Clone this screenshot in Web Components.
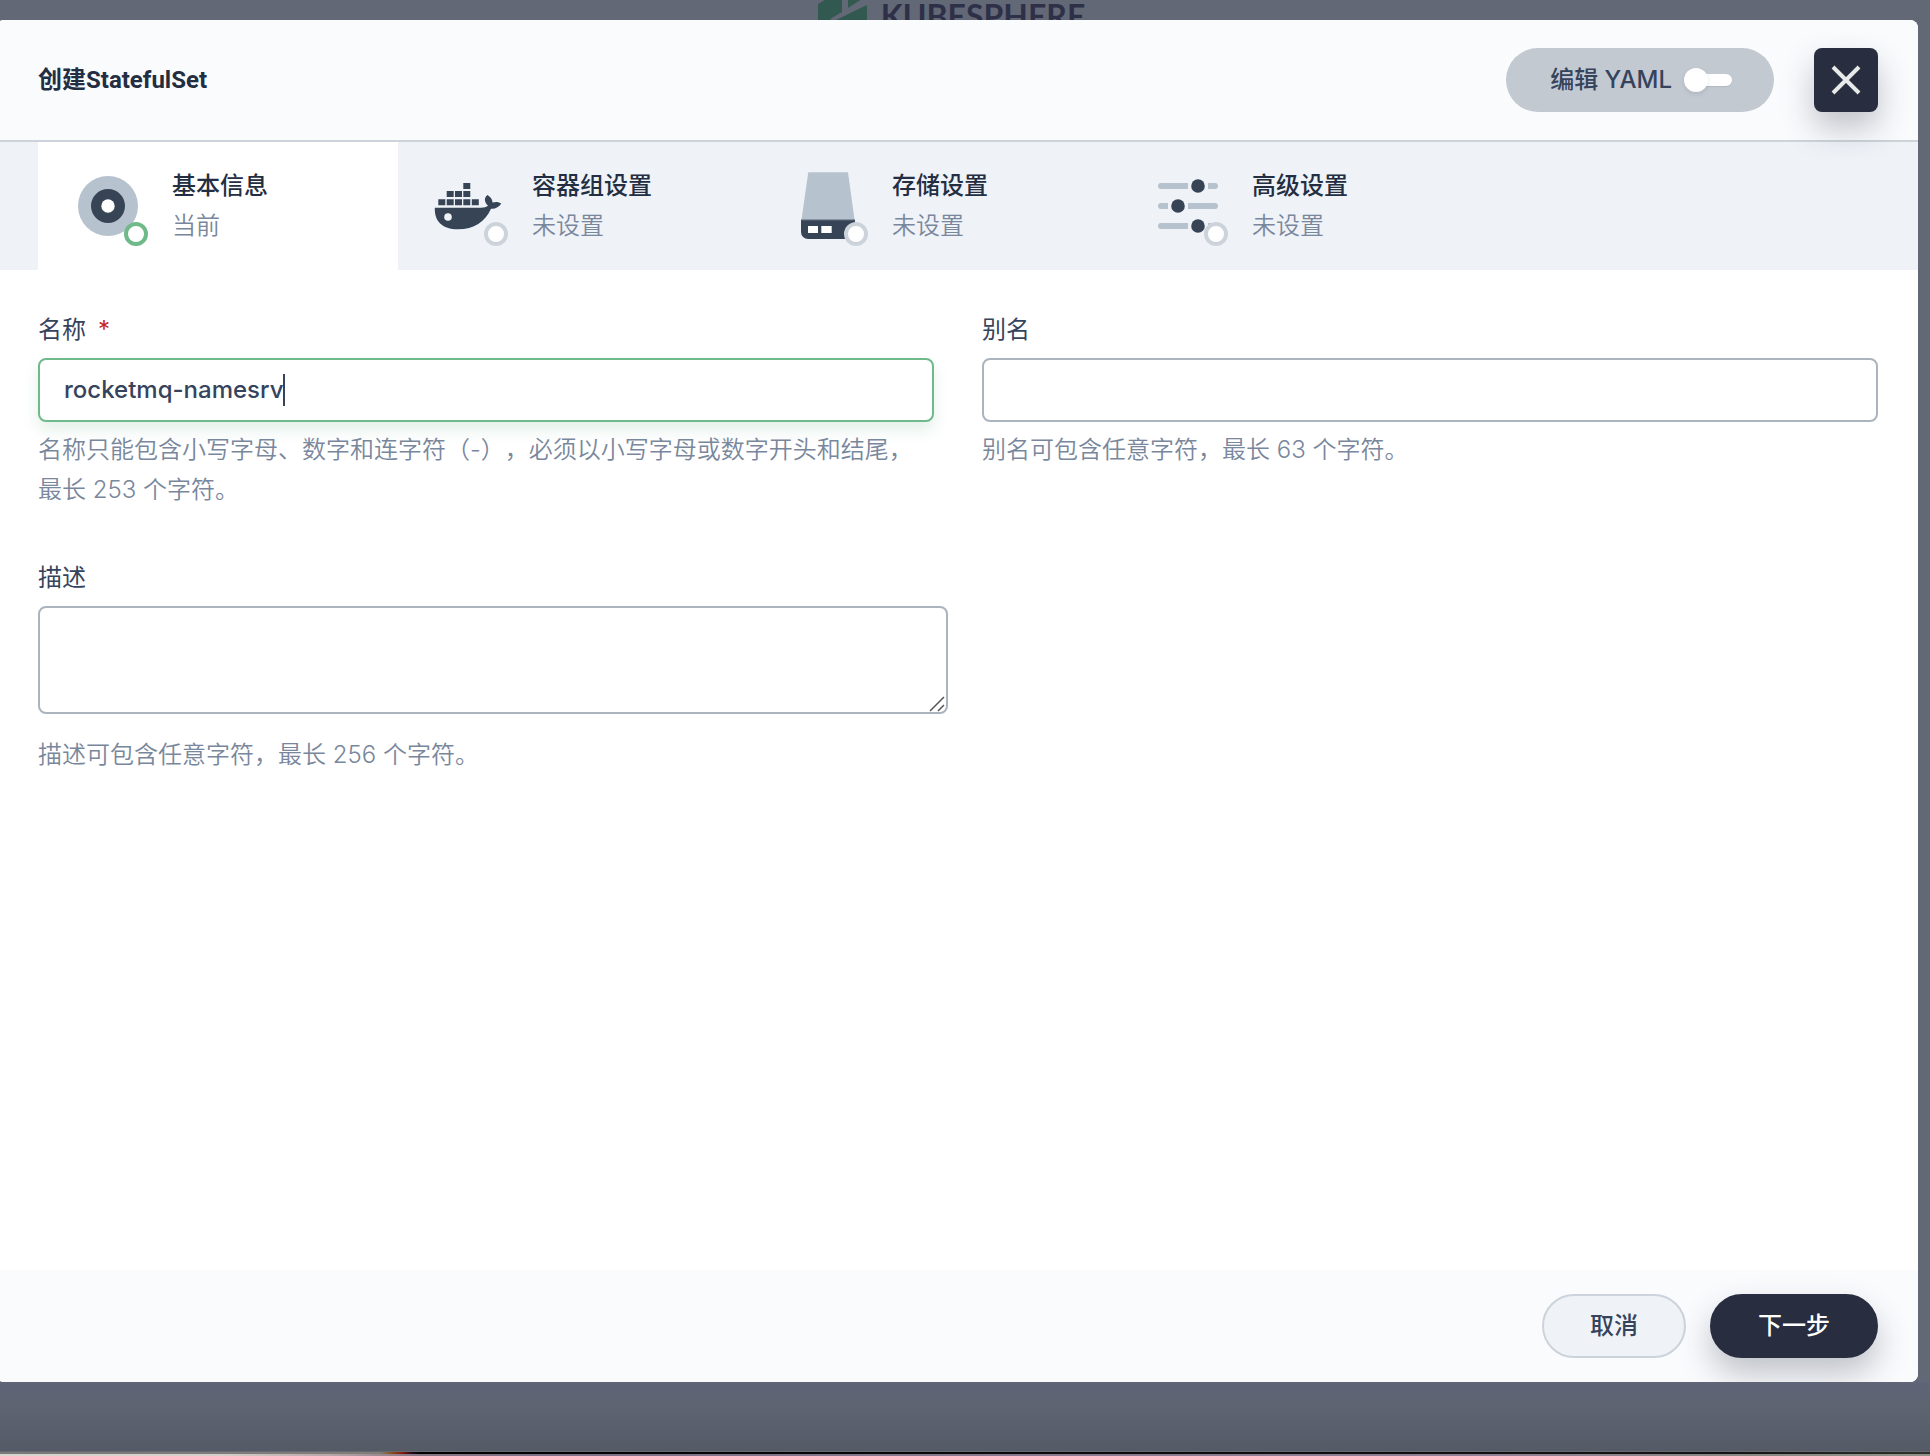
<!DOCTYPE html>
<html lang="zh-CN">
<head>
<meta charset="utf-8">
<title>创建StatefulSet</title>
<style>
  html, body { margin: 0; }
  body {
    font-family: Inter, "Noto Sans CJK SC", sans-serif;
    font-size: 24px;
    line-height: 40px;
    color: #36435c;
    overflow: hidden;
    text-spacing-trim: space-all;
  }
</style>
</head>
<body>
<ks-stage>
  <ks-modal heading="创建StatefulSet">
    <ks-yaml-switch slot="actions"></ks-yaml-switch>
    <ks-close slot="actions"></ks-close>
    <ks-steps slot="steps">
      <ks-step icon="base" active><span>基本信息</span><span slot="state">当前</span></ks-step>
      <ks-step icon="docker"><span>容器组设置</span><span slot="state">未设置</span></ks-step>
      <ks-step icon="storage"><span>存储设置</span><span slot="state">未设置</span></ks-step>
      <ks-step icon="sliders"><span>高级设置</span><span slot="state">未设置</span></ks-step>
    </ks-steps>
    <ks-form>
      <ks-field label="名称" value="rocketmq-namesrv" required focused>名称只能包含小写字母、数字和连字符（-），必须以小写字母或数字开头和结尾，最长 253 个字符。</ks-field>
      <ks-field label="别名">别名可包含任意字符，最长 63 个字符。</ks-field>
      <ks-textarea label="描述">描述可包含任意字符，最长 256 个字符。</ks-textarea>
    </ks-form>
    <ks-button slot="footer">取消</ks-button>
    <ks-button slot="footer" primary>下一步</ks-button>
  </ks-modal>
</ks-stage>

<script>
const define = (name, render) => customElements.define(name, class extends HTMLElement {
  constructor() {
    super();
    this.attachShadow({ mode: "open" });
  }
  connectedCallback() {
    if (this.shadowRoot.childNodes.length) return;
    const t = document.createElement("template");
    t.innerHTML = "<style>*{box-sizing:border-box}</style>" + render(this);
    this.shadowRoot.append(t.content.cloneNode(true));
  }
});

const ICONS = {
  base: `<circle cx="40" cy="40" r="30" fill="#b6c2cd"/><circle cx="40" cy="40" r="17" fill="#364456"/><circle cx="40" cy="40" r="6.7" fill="#fff"/>`,
  docker: `<g fill="#364456"><path d="M35.3 17h7v6h-7zM18.7 25h7v6h-7zM27 25h7v6h-7zM35.3 25h7v6h-7zM10.3 33.3h7v6h-7zM18.7 33.3h7v6h-7zM27 33.3h7v6h-7zM35.3 33.3h7v6h-7zM43.8 33.3h7v6h-7z"/><path d="M6.8 41.7H53C56 41.7 58.500 41 60 39.800C56 36 56 31.500 59.500 29C63 31 64.500 34 64.500 36.500C68 35.500 71 36 73.300 37.500C71 41 67 43.300 63 42.700C57 56 46 63.300 30 63.300C14 63.300 6.300 55 6.800 41.700Z"/></g><circle cx="20" cy="51" r="3.8" fill="#eff3f8"/>`,
  storage: `<path d="M20.300 6.300H60L66.500 53.500H13.500Z" fill="#b6c2cd"/><path d="M13 53H67V66A7 7 0 0 1 60 73H20A7 7 0 0 1 13 66Z" fill="#364456"/><path d="M13 53h54v1.300H13z" fill="#8693a3"/><path d="M20 60h10v7H20zM33.300 60h10.400v7H33.300z" fill="#fff"/>`,
  sliders: `<g fill="#b6c2cd"><path d="M13 17H40V23H13A3 3 0 0 1 13 17ZM60 17H67A3 3 0 0 1 67 23H60ZM13 37H20V43H13A3 3 0 0 1 13 37ZM40 37H67A3 3 0 0 1 67 43H40ZM13 57H40V63H13A3 3 0 0 1 13 57ZM60 57H67A3 3 0 0 1 67 63H60Z"/></g><g fill="#364456"><circle cx="50" cy="20" r="6.8"/><circle cx="30" cy="40" r="6.800"/><circle cx="50" cy="60" r="6.800"/></g>`
};

define("ks-logo", () => `
  <style>
    :host { display: flex; align-items: center; gap: 13px; height: 60px; color: #2e3048;
      font: 700 32px/40px Lato, sans-serif; }
    svg { width: 51px; height: 60px; }
  </style>
  <svg viewBox="0 0 51 60" aria-hidden="true">
    <path d="M1 18 25 4V26L13 33 17 35 14 52 1 44ZM31 4 45 13 31 22ZM50 19V44L26 58 17 52V35Z" fill="#31594f"/></svg>
  <span>KUBESPHERE</span>`);

define("ks-stage", () => `
  <style>
    :host { position: relative; display: flex; flex-direction: column; min-height: 100vh; background: #636876; }
    ks-logo { position: absolute; top: -14px; left: 0; right: 28px; justify-content: center; }
    main { position: relative; flex: 1; display: flex; padding: 20px 12px 0 0; margin-left: -4px; }
    .shade { height: 69px; background: linear-gradient(#5f6577, #5d6370 40%, #545a66); }
    .rim { height: 1px; background: #666a70; }
    .edge, .wall { height: 2px; }
    .edge { background: linear-gradient(90deg, #7b7977 0, #807d7a 380px, #8c5a20 390px, #8a1a10 402px, #240818 412px, #000 420px, #141414 90%, #30332b); }
    .wall { background: linear-gradient(90deg, #d8d6d1 0, #d5cfcb 220px, #b8a6a8 330px, #857482 420px, #7c7086 28%, #918094 78%, #878783 90%, #8f9189); }
  </style>
  <ks-logo></ks-logo>
  <main><slot></slot></main>
  <div class="shade"></div>
  <div class="rim"></div><div class="edge"></div><div class="wall"></div>`);

define("ks-modal", el => `
  <style>
    :host { flex: 1; display: flex; flex-direction: column; position: relative; overflow: hidden;
      border-radius: 8px; background: #fff; }
    header { position: relative; z-index: 1; display: flex; align-items: center; justify-content: space-between;
      padding: 28px 40px 28px 42px; background: #fafbfd; border-bottom: 2px solid #ccd3db; }
    h1 { margin: 0; font: 700 24px/40px Roboto, "Noto Sans CJK SC", sans-serif; color: #242e42; }
    .actions { display: flex; gap: 40px; }
    .body { flex: 1; }
    footer { display: flex; justify-content: flex-end; gap: 24px; padding: 24px 40px; background: #fafbfd; }
  </style>
  <header><h1>${el.getAttribute("heading")}</h1><div class="actions"><slot name="actions"></slot></div></header>
  <slot name="steps"></slot>
  <div class="body"><slot></slot></div>
  <footer><slot name="footer"></slot></footer>`);

define("ks-yaml-switch", () => `
  <style>
    :host { display: block; }
    label { display: flex; align-items: center; gap: 12px; height: 64px; padding: 0 42px 0 44px; border-radius: 32px;
      background: #c3c9d1; color: #36435c; font-weight: 500; }
    input { appearance: none; display: flex; align-items: center; margin: 0; width: 48px; height: 24px; }
    input::before { content: ""; width: 24px; height: 24px; border-radius: 50%; background: #fff;
      box-shadow: 0 2px 4px rgba(36,46,66,.12); z-index: 1; }
    input::after { content: ""; flex: 1; height: 12px; margin-left: -8px; border-radius: 0 6px 6px 0; background: #fff;
      box-shadow: 0 1px 1px rgba(36,46,66,.1); }
  </style>
  <label for="yaml">编辑 YAML<input id="yaml" type="checkbox" role="switch"></label>`);

define("ks-close", () => `
  <style>
    :host { display: block; }
    button { display: grid; place-items: center; width: 64px; height: 64px; padding: 0; border: 0; border-radius: 8px;
      background: #282d40; box-shadow: 0 16px 32px rgba(36,46,66,.28); }
  </style>
  <button type="button" aria-label="关闭"><svg width="32" height="32" viewBox="0 0 32 32" aria-hidden="true">
    <path d="M3 3 29 29M29 3 3 29" stroke="#e8eaea" stroke-width="4"/></svg></button>`);

define("ks-steps", () => `
  <style>:host { display: flex; padding: 0 42px; background: #eff3f8; }</style>
  <slot></slot>`);

define("ks-step", el => `
  <style>
    :host { display: block; width: 360px; }
    :host([active]) button { background: #fff; }
    :host([active]) .dot { border-color: #70b98b; }
    button { display: flex; gap: 24px; width: 100%; padding: 24px 30px; border: 0; background: none; text-align: left;
      font: inherit; color: #79879c; }
    .icon { position: relative; width: 80px; height: 80px; }
    .icon svg { display: block; }
    .dot { position: absolute; right: 0; bottom: 0; width: 24px; height: 24px; border: 4px solid #ccd3db;
      border-radius: 50%; background: #fff; }
    .text { display: flex; flex-direction: column; }
    .name { font-weight: 500; color: #242e42; }
    .state { font-weight: 350; }
  </style>
  <button type="button">
    <span class="icon"><svg width="80" height="80" viewBox="0 0 80 80" aria-hidden="true">${ICONS[el.getAttribute("icon")]}</svg><span class="dot"></span></span>
    <span class="text"><span class="name"><slot></slot></span><span class="state"><slot name="state"></slot></span></span>
  </button>`);

define("ks-form", () => `
  <style>:host { display: grid; grid-template-columns: 1fr 1fr; gap: 48px; padding: 40px 40px 48px 42px; }</style>
  <slot></slot>`);

define("ks-field", el => `
  <style>
    :host { display: flex; flex-direction: column; gap: 8px; min-width: 0; }
    label { font-weight: 400; }
    .req { margin-left: 12px; color: #ca2621; }
    .box { display: flex; align-items: center; height: 64px; padding: 0 24px; border: 2px solid #abb4be;
      border-radius: 8px; background: #fff; }
    :host([focused]) .box { border-color: #70b98b; box-shadow: 0 8px 16px rgba(85,160,120,.16); }
    input { flex: 1; min-width: 0; padding: 0; border: 0; outline: 0; background: none; font: inherit; font-weight: 500;
      color: #36435c; }
    :host([focused]) input { flex: none; field-sizing: content; caret-color: transparent; }
    .caret { width: 2px; height: 32px; background: #36435c; }
    p { margin: 0; font-weight: 350; color: #79879c; }
  </style>
  <label for="in">${el.getAttribute("label")}${el.hasAttribute("required") ? '<span class="req">*</span>' : ""}</label>
  <div class="box"><input id="in" type="text" value="${el.getAttribute("value") || ""}">${el.hasAttribute("focused") ? '<span class="caret"></span>' : ""}</div>
  <p><slot></slot></p>`);

define("ks-textarea", el => `
  <style>
    :host { grid-column: 1 / -1; display: flex; flex-direction: column; gap: 8px; max-width: 910px; }
    .wrap { position: relative; margin-bottom: 13px; }
    textarea { display: block; width: 100%; height: 108px; padding: 12px 24px; border: 2px solid #abb4be;
      border-radius: 8px; background: #fff; font: inherit; color: #36435c; outline: 0; resize: vertical; }
    textarea::-webkit-resizer { background: none; }
    svg { position: absolute; right: 3px; bottom: 2px; pointer-events: none; }
    p { margin: 0; font-weight: 350; color: #79879c; }
  </style>
  <label for="ta">${el.getAttribute("label")}</label>
  <div class="wrap"><textarea id="ta"></textarea>
    <svg width="16" height="16" viewBox="0 0 16 16" aria-hidden="true"><path d="M1 15 15 1M9 15 15 9" stroke="#555" stroke-width="1.500"/></svg></div>
  <p><slot></slot></p>`);

define("ks-button", () => `
  <style>
    :host { display: block; }
    button { height: 64px; padding: 0 46px; border: 2px solid #ccd3db; border-radius: 32px; background: #eff3f8;
      font: inherit; font-weight: 500; color: #36435c; }
    :host([primary]) button { border-color: #282d40; background: #282d40; color: #fff;
      box-shadow: 0 16px 32px rgba(36,46,66,.28); }
  </style>
  <button type="button"><slot></slot></button>`);
</script>
</body>
</html>
